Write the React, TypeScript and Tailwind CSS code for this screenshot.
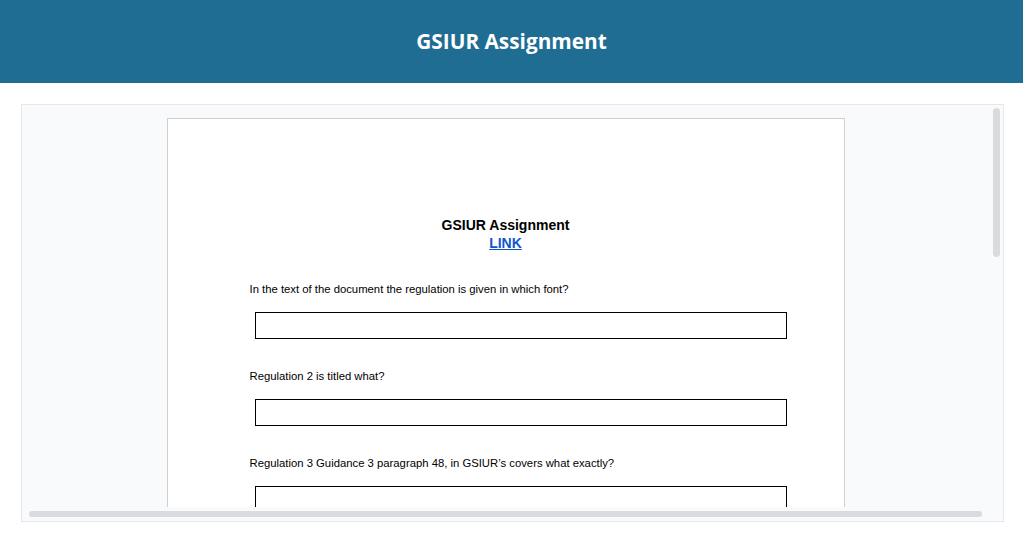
const questions = [
  "In the text of the document the regulation is given in which font?",
  "Regulation 2 is titled what?",
  "Regulation 3 Guidance 3 paragraph 48, in GSIUR\u2019s covers what exactly?",
];

export default function App() {
  return (
    <div className="min-h-screen bg-white">
      <header className="flex h-[83px] items-center justify-center bg-[#1f6d93]">
        <h1 className="text-[20.8px] font-bold text-white [font-family:'Open_Sans',sans-serif]">
          GSIUR Assignment
        </h1>
      </header>

      <div className="relative ml-[21px] mr-[19px] mt-[21px] flex h-[418px] flex-col border border-[#e5e7eb] bg-[#f9fafb]">
        <div className="flex min-h-0 flex-1">
          <div className="flex flex-1 justify-center overflow-hidden pr-[2px] pt-[13px]">
            <div className="h-[800px] w-[678px] shrink-0 border border-[#cfcfcf] bg-white pt-[97px] [font-family:'Liberation_Sans',Arial,sans-serif]">
              <div className="text-center">
                <p className="text-[14px] font-bold leading-[18px] text-black">GSIUR Assignment</p>
                <a className="block text-[14px] font-bold leading-[18px] text-[#1155cc] underline">LINK</a>
              </div>
              <div className="mt-[29px] pl-[82px]">
                {questions.map((q) => (
                  <div key={q} className="mb-[29px]">
                    <p className="text-[11.3px] leading-[16px] text-black">{q}</p>
                    <div className="ml-[5px] mt-[15px] h-[27px] w-[532px] border border-black bg-white" />
                  </div>
                ))}
              </div>
            </div>
          </div>
          <div className="w-[12px] shrink-0 pl-[2px] pt-[3px]">
            <div className="h-[149px] w-[7px] rounded-full bg-[#dadbde]" />
          </div>
        </div>
        <div className="h-[14px] shrink-0 pl-[7px] pr-[21px] pt-[4px]">
          <div className="h-[6px] w-full rounded-full bg-[#dadbde]" />
        </div>
      </div>
    </div>
  );
}
